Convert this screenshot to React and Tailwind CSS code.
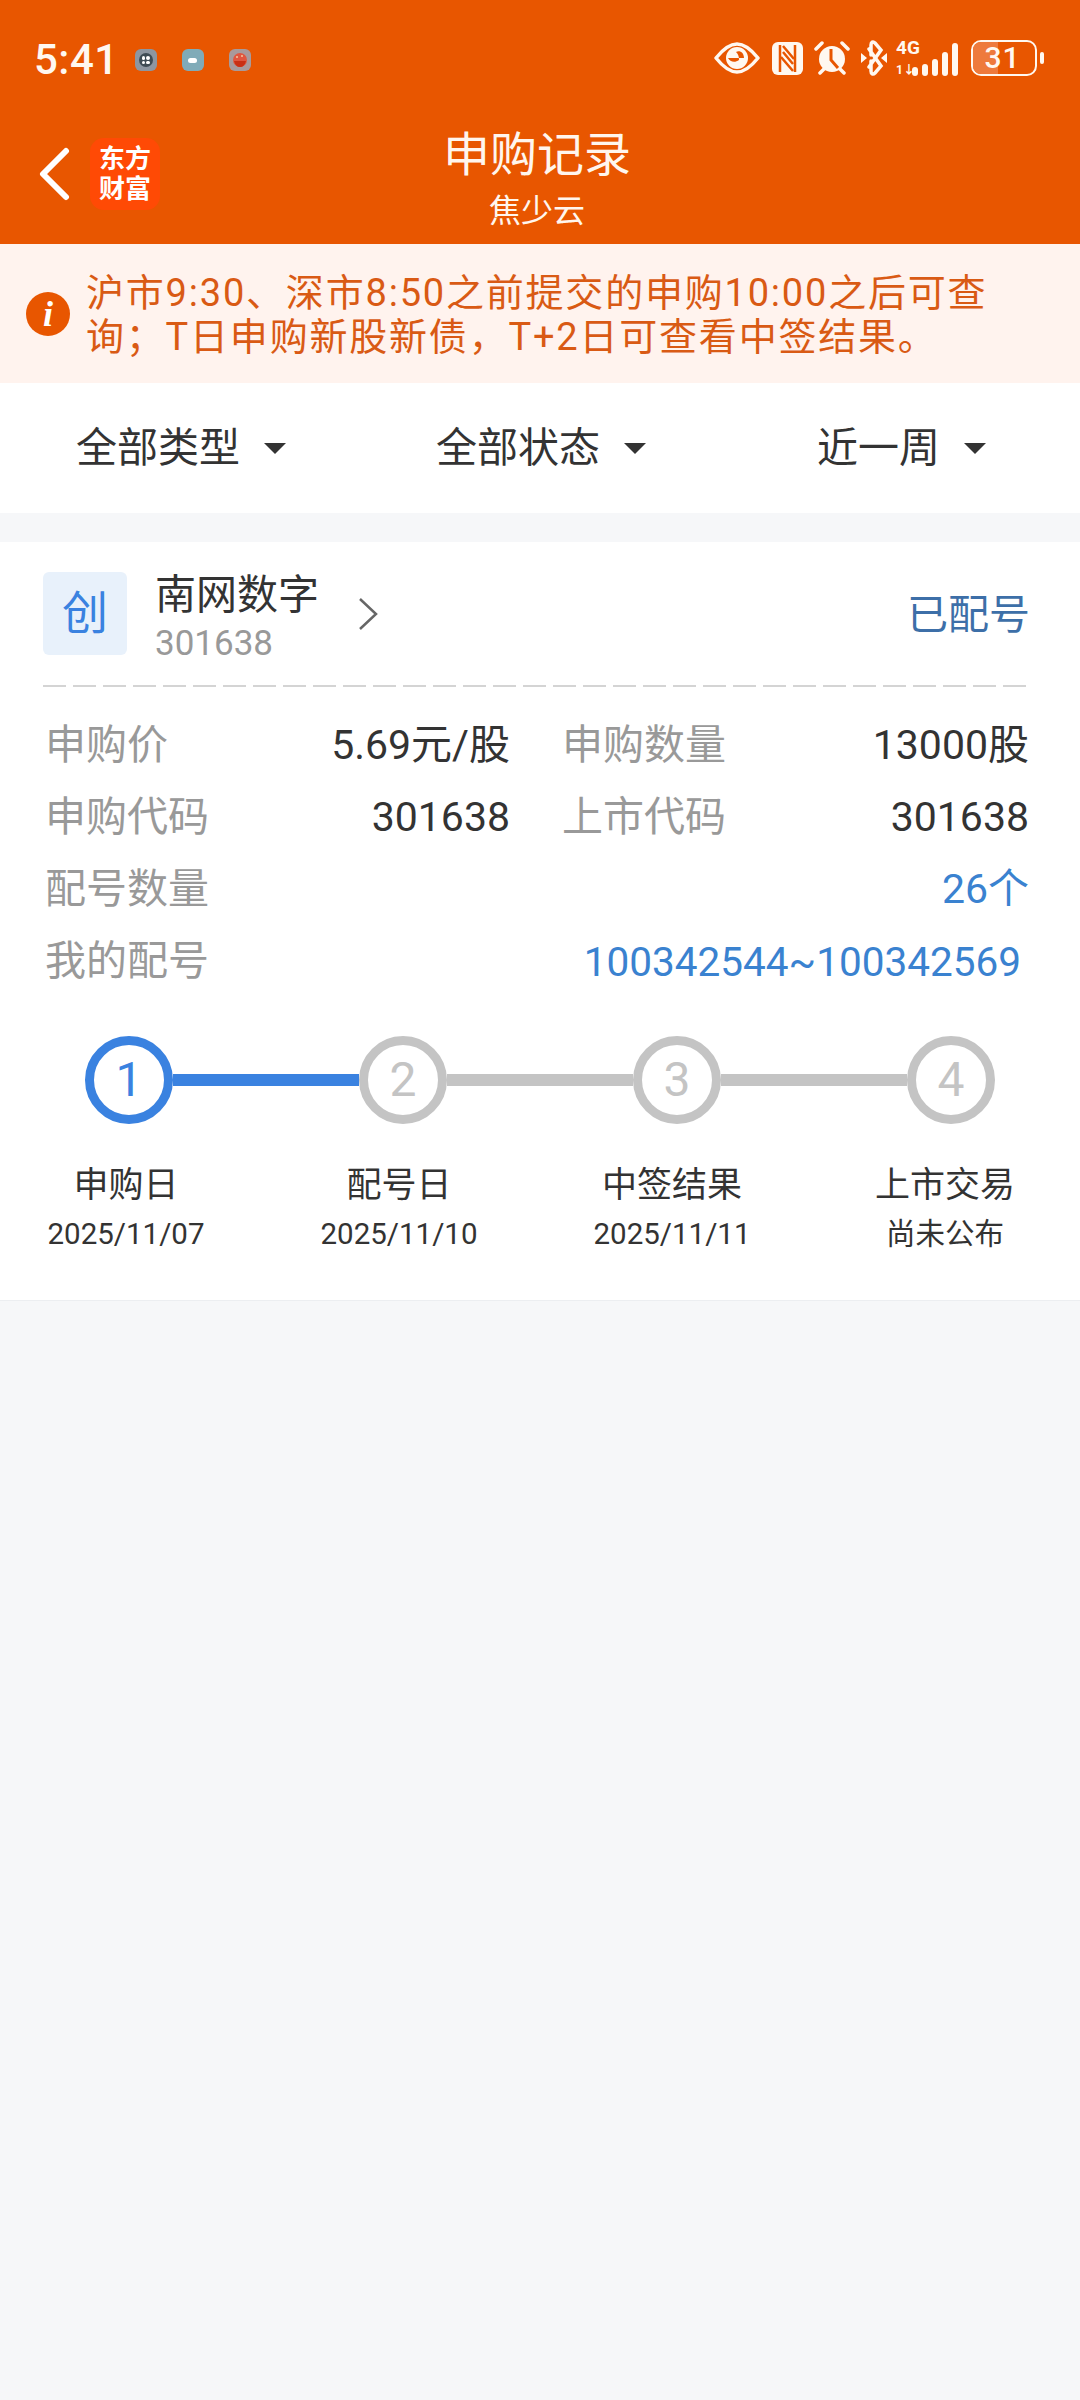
const CJK = { fontFamily: 'Roboto, "Noto Sans CJK SC", sans-serif' };

const StatusIcons = () => (
    <div className="flex items-center text-[#fff8f0]">
        <svg width="46" height="32" viewBox="0 0 46 32" className="mr-[12px]">
            <path d="M2 16 C10 6 17 2 23 2 C29 2 36 6 44 16 C36 26 29 30 23 30 C17 30 10 26 2 16 Z" fill="none" stroke="#fff8f0" strokeWidth="3.5" strokeLinejoin="round" />
            <circle cx="23" cy="16" r="11" fill="#fff8f0" />
            <path d="M14 16 C16 20 21 21 25 18 C25 14 24 12 22 10 C26 8 30 11 30 16" fill="#e85600" />
        </svg>
        <svg width="31" height="33" viewBox="0 0 31 33" className="mr-[11px]">
            <rect x="0" y="0" width="31" height="33" rx="6" fill="#fff8f0" />
            <path d="M8 3 L8 30 M23 3 L23 30" stroke="#e85600" strokeWidth="2.5" />
            <path d="M11 4 L22 17 M9 15 L21 29 M11 10 L21 22" stroke="#e85600" strokeWidth="2.5" fill="none" />
        </svg>
        <svg width="36" height="36" viewBox="0 0 36 36" className="mr-[11px]">
            <circle cx="18" cy="19" r="13" fill="#fff8f0" />
            <path d="M17 9 L17 20 L24 28" stroke="#e85600" strokeWidth="3" fill="none" />
            <path d="M2 9 L8 3 M34 9 L28 3 M6 33 L10 29 M30 33 L26 29" stroke="#fff8f0" strokeWidth="3.5" strokeLinecap="round" />
        </svg>
        <svg width="26" height="36" viewBox="0 0 26 36" className="mr-[9px]">
            <path d="M8 9 L20 26 L14 33 C12 35 10 34 10 31 L10 21 M8 27 L20 10 L14 3 C12 1 10 2 10 5 L10 15" stroke="#fff8f0" strokeWidth="3.5" fill="none" strokeLinecap="round" />
            <path d="M0 13 L6 18 L0 23 Z M26 13 L20 18 L26 23 Z" fill="#fff8f0" />
        </svg>
        <div className="relative w-[62px] h-[36px] mr-[13px]">
            <span className="absolute left-0 top-[-2px] text-[19px] font-bold leading-none">4G</span>
            <span className="absolute left-0 bottom-[0px] text-[12px] font-bold leading-none">1↓</span>
            <div className="absolute right-0 bottom-0 flex items-end gap-[4px]">
                <span className="w-[6px] h-[9px] rounded-full bg-[#fff8f0]" />
                <span className="w-[6px] h-[12px] rounded-full bg-[#fff8f0]" />
                <span className="w-[6px] h-[17px] rounded-full bg-[#fff8f0]" />
                <span className="w-[6px] h-[24px] rounded-full bg-[#fff8f0]" />
                <span className="w-[6px] h-[33px] rounded-full bg-[#fff8f0]" />
            </div>
        </div>
        <div className="relative w-[66px] h-[36px] rounded-[10px] border-[2px] border-[#fff8f0] flex items-center justify-center text-[30px] font-medium overflow-hidden">
            <span className="absolute left-0 top-0 bottom-0 w-[25px] bg-[#ee7a3c]" />
            <span className="relative leading-none tracking-[1px] -ml-[3px]">31</span>
        </div>
        <span className="ml-[3px] w-[4px] h-[12px] rounded-full bg-[#fff8f0]" />
    </div>
);

const Filter = ({ label, className }) => (
    <div className={"flex items-center " + className}>
        <span className="text-[41px] text-[#333333] leading-none">{label}</span>
        <span className="ml-[24px] w-0 h-0 border-x-[11px] border-x-transparent border-t-[11px] border-t-[#333333]" />
    </div>
);

const InfoCell = ({ label, value }) => (
    <div className="flex items-center justify-between h-[72px]">
        <span className="text-[41px] text-[#999999]">{label}</span>
        <span className="text-[41px] text-[#333333]">{value}</span>
    </div>
);

const Step = ({ n, active }) => (
    <div className={"w-[88px] h-[88px] shrink-0 rounded-full border-[9px] bg-white flex items-center justify-center text-[48px] " + (active ? "border-[#3a82e0] text-[#3a82e0]" : "border-[#c4c4c4] text-[#c4c4c4]")}>
        {n}
    </div>
);

const steps = [
    { title: "申购日", date: "2025/11/07" },
    { title: "配号日", date: "2025/11/10" },
    { title: "中签结果", date: "2025/11/11" },
    { title: "上市交易", date: "尚未公布" },
];

const App = () => {
    return (
        <div className="w-[1080px] h-[2400px] bg-[#f6f7f9] flex flex-col" style={CJK}>
            <div className="bg-[#e85600] h-[244px] flex flex-col text-white">
                <div className="h-[115px] pl-[34px] pr-[36px] pt-[36px] flex items-start justify-between">
                    <div className="flex items-center h-[44px] mt-[2px]">
                        <span className="text-[42px] font-medium leading-none tracking-[0.5px] text-[#fff8f0]">5:41</span>
                        <div className="ml-[16px] flex gap-[25px]">
                            <span className="w-[22px] h-[22px] rounded-[6px] bg-[#8d96a0] flex items-center justify-center">
                                <span className="w-[14px] h-[14px] rounded-full bg-[#3f4c54] grid grid-cols-2 gap-[1px] p-[3px]">
                                    <span className="bg-white rounded-full" /><span className="bg-white rounded-full" /><span className="bg-white rounded-full" /><span className="bg-white rounded-full" />
                                </span>
                            </span>
                            <span className="w-[22px] h-[22px] rounded-[6px] bg-[#80abb8] flex items-center justify-center"><span className="w-[9px] h-[5px] rounded-full bg-white" /></span>
                            <span className="w-[22px] h-[22px] rounded-[6px] bg-[#a89a9c] flex items-center justify-center">
                                <svg width="14" height="14" viewBox="0 0 14 14">
                                    <circle cx="7" cy="7" r="7" fill="#e0563f" />
                                    <circle cx="4" cy="4" r="1" fill="#f5c9a0" />
                                    <circle cx="9" cy="3" r="1" fill="#f5c9a0" />
                                    <path d="M1 8 H13 C12 12 10 14 7 14 C4 14 2 12 1 8 Z" fill="#c92f14" />
                                </svg>
                            </span>
                        </div>
                    </div>
                    <div className="mt-[4px]">
                        <StatusIcons />
                    </div>
                </div>
                <div className="relative flex-1 flex items-center pl-[38px]">
                    <svg width="32" height="54" viewBox="0 0 32 54" className="mb-[12px]">
                        <path d="M28 4 L5 27 L28 50" fill="none" stroke="#fff" strokeWidth="6" strokeLinecap="round" strokeLinejoin="round" />
                    </svg>
                    <div className="ml-[20px] mb-[12px] w-[70px] h-[72px] rounded-[14px] bg-[#ff4a05] flex items-center justify-center text-center font-bold text-[26px] leading-[30px] text-white">
                        东方<br />财富
                    </div>
                    <div className="absolute left-0 right-[6px] top-[9px] flex flex-col items-center">
                        <span className="text-[47px] leading-[62px] text-[#fff6ee]">申购记录</span>
                        <span className="text-[32px] leading-[44px] mt-[3px] text-[#fff6ee]">焦少云</span>
                    </div>
                </div>
            </div>

            <div className="bg-[#fff3ee] h-[139px] flex items-center pl-[26px]">
                <div className="w-[44px] h-[44px] shrink-0 rounded-full bg-[#e85600] flex items-center justify-center text-white text-[36px] font-bold italic leading-none" style={{ fontFamily: '"Liberation Serif", serif' }}>i</div>
                <p className="ml-[16px] mt-[2px] text-[38px] leading-[44px] tracking-[1.8px] text-[#d95a14] whitespace-nowrap">沪市9:30、深市8:50之前提交的申购10:00之后可查<br />询；T日申购新股新债，T+2日可查看中签结果。</p>
            </div>

            <div className="bg-white h-[130px] flex items-center">
                <Filter label="全部类型" className="ml-[76px]" />
                <Filter label="全部状态" className="ml-[150px]" />
                <Filter label="近一周" className="ml-[171px]" />
            </div>

            <div className="mt-[29px] bg-white border-b border-[#eceef1] h-[759px] flex flex-col">
                <div className="ml-[43px] mr-[50px] h-[143px] flex pt-[30px]">
                    <div className="w-[84px] h-[83px] rounded-[6px] bg-[#e8f1fb] flex items-center justify-center text-[46px] text-[#3a82e0]">创</div>
                    <div className="ml-[28px] flex flex-col">
                        <span className="text-[41px] leading-[52px] text-[#333333] -mt-[3px]">南网数字</span>
                        <span className="text-[35px] leading-[44px] mt-[1px] text-[#999999]">301638</span>
                    </div>
                    <svg width="20" height="34" viewBox="0 0 20 34" className="ml-[39px] mt-[25px]">
                        <path d="M2 2 L18 17 L2 32" fill="none" stroke="#666666" strokeWidth="2.5" />
                    </svg>
                    <span className="ml-auto mt-[17px] text-[41px] leading-[52px] text-[#3d6fa8]">已配号</span>
                </div>
                <div className="ml-[43px] mr-[48px] h-[2px] bg-[repeating-linear-gradient(90deg,#d4d4d4_0,#d4d4d4_23px,transparent_23px,transparent_30px)]" />

                <div className="pl-[45px] pr-[51px] pt-[23px] grid grid-cols-[465px_1fr] gap-x-[52px]">
                    <InfoCell label="申购价" value="5.69元/股" />
                    <InfoCell label="申购数量" value="13000股" />
                    <InfoCell label="申购代码" value="301638" />
                    <InfoCell label="上市代码" value="301638" />
                </div>
                <div className="pl-[45px] pr-[51px] flex items-center justify-between h-[72px]">
                    <span className="text-[41px] text-[#999999]">配号数量</span>
                    <span className="text-[41px] text-[#3a82d0]">26个</span>
                </div>
                <div className="pl-[45px] pr-[59px] flex items-center justify-between h-[72px]">
                    <span className="text-[41px] text-[#999999]">我的配号</span>
                    <span className="text-[40.5px] text-[#3a82d0]">100342544~100342569</span>
                </div>

                <div className="mt-[38px] pl-[85px] pr-[85px] flex items-center">
                    <Step n="1" active />
                    <span className="flex-1 h-[12px] bg-[#3a82e0]" />
                    <Step n="2" />
                    <span className="flex-1 h-[12px] bg-[#c4c4c4]" />
                    <Step n="3" />
                    <span className="flex-1 h-[12px] bg-[#c4c4c4]" />
                    <Step n="4" />
                </div>

                <div className="mt-[39px] pl-[26px] flex">
                    {steps.map((s, i) => (
                        <div key={i} className="w-[200px] mr-[73px] shrink-0 flex flex-col items-center text-[#333333]">
                            <span className="text-[35px] leading-[46px]">{s.title}</span>
                            <span className="text-[29.5px] leading-[40px] mt-[5px]">{s.date}</span>
                        </div>
                    ))}
                </div>
            </div>
        </div>
    );
};

export default App;
